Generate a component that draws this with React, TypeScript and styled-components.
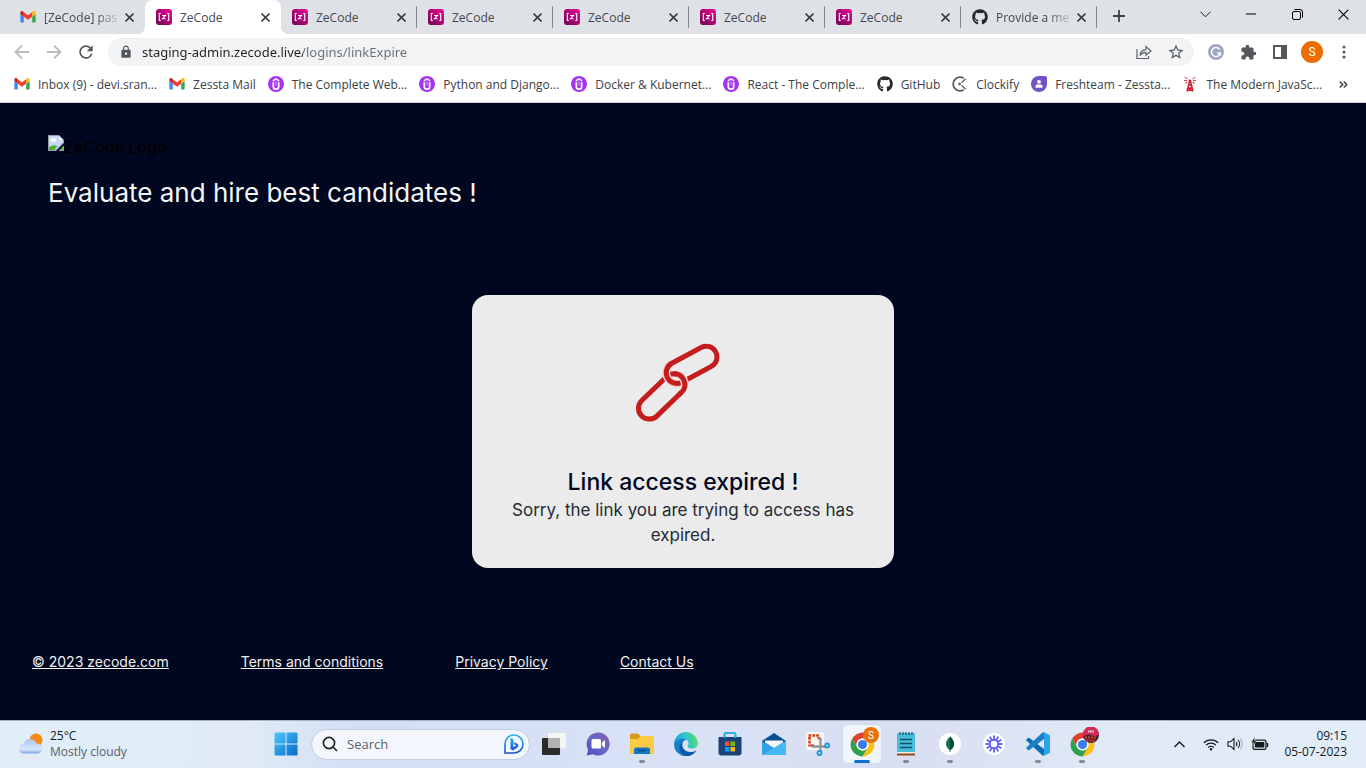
import React from 'react';
import styled, { createGlobalStyle, css } from 'styled-components';
import { FaGithub } from 'react-icons/fa';
import { MdExtension, MdLock, MdRefresh, MdStarBorder } from 'react-icons/md';

const UI = `"Open Sans", "Noto Sans", sans-serif`;
const BRAND = `Inter, "Liberation Sans", sans-serif`;
const NAVY = '#00071f';

const GlobalStyle = createGlobalStyle`
  * { box-sizing: border-box; }
  body { margin: 0; background: ${NAVY}; }
  button { border: 0; padding: 0; background: none; color: inherit; font: inherit; }
  svg { display: block; flex: none; }
`;

const Screen = styled.div`
  display: flex;
  flex-direction: column;
  min-height: 100vh;
  font-family: ${UI};
  font-size: 12px;
`;

/* ---------- browser chrome ---------- */

const TabStrip = styled.div`
  display: flex;
  height: 34px;
  padding-left: 9px;
  background: #dee1e6;
`;

const TabItem = styled.div<{ $active?: boolean; $divider?: boolean }>`
  position: relative;
  display: flex;
  align-items: center;
  flex: 0 1 136px;
  min-width: 0;
  padding: 0 9px 0 11px;
  color: #45494d;
  border-right: 1px solid transparent;
  ${p => p.$divider && css`
    border-image: linear-gradient(transparent 7px, #85898e 7px, #85898e 27px, transparent 27px) 1;
  `}
  ${p => p.$active && css`
    background: #fff;
    border-radius: 8px 8px 0 0;
    &::before, &::after {
      content: '';
      position: absolute;
      bottom: 0;
      width: 8px;
      height: 8px;
    }
    &::before { left: -8px; background: radial-gradient(circle at 0 0, transparent 8px, #fff 8px); }
    &::after { right: -9px; background: radial-gradient(circle at 100% 0, transparent 8px, #fff 8px); }
  `}
`;

const TabButton = styled.button`
  display: flex;
  align-items: center;
  gap: 8px;
  flex: 1;
  min-width: 0;
  height: 100%;
`;

const TabTitle = styled.span<{ $fade?: boolean }>`
  flex: 1;
  text-align: left;
  white-space: nowrap;
  ${p => p.$fade && css`mask-image: linear-gradient(90deg, #000 65%, transparent);`}
`;

const IconButton = styled.button<{ $w?: number; $h?: number }>`
  display: flex;
  align-items: center;
  justify-content: center;
  flex: none;
  width: ${p => p.$w ?? 32}px;
  height: ${p => p.$h ?? 32}px;
  color: #54585d;
`;

const NewTab = styled(IconButton)`margin-left: 8px;`;

const WindowControls = styled.div`
  display: flex;
  margin-left: auto;
`;

const Toolbar = styled.div`
  display: flex;
  align-items: center;
  height: 36px;
  padding: 0 6px;
  background: #fff;
`;

const Omnibox = styled.div`
  display: flex;
  align-items: center;
  flex: 1;
  height: 28px;
  margin: 0 6px;
  padding: 0 2px 0 11px;
  border-radius: 14px;
  background: #f1f3f4;
  color: #54585d;
`;

const Address = styled.input`
  flex: 1;
  min-width: 0;
  height: 28px;
  margin-left: 9px;
  padding: 0;
  border: 0;
  outline: 0;
  font: 13px "Noto Sans", "Open Sans", sans-serif;
  color: transparent;
  background: linear-gradient(90deg, #202124 161px, #6a6e73 161px);
  background-clip: text;
`;

const Avatar = styled.span`
  display: flex;
  align-items: center;
  justify-content: center;
  width: 22px;
  height: 22px;
  border-radius: 50%;
  background: #ef6c00;
  color: #fff;
  font: 12px Roboto, sans-serif;
`;

const Bookmarks = styled.nav`
  display: flex;
  align-items: center;
  gap: 12px;
  height: 33px;
  padding: 0 14px 4px;
  background: #fff;
  border-bottom: 1px solid #d5d7da;
  overflow: hidden;
`;

const Bookmark = styled.a`
  display: flex;
  align-items: center;
  flex: none;
  gap: 8px;
  color: #3c4043;
  text-decoration: none;
  white-space: nowrap;
`;

const More = styled(IconButton)`margin-left: auto;`;

/* ---------- page ---------- */

const Page = styled.div`
  display: flex;
  flex-direction: column;
  flex: 1;
  background: ${NAVY};
  font-family: ${BRAND};
`;

const Header = styled.header`padding: 32px 48px 0;`;

const MissingLogo = styled.div`
  display: flex;
  height: 24px;
  color: #000;
  font-size: 16px;
  line-height: 24px;
`;

const Tagline = styled.h1`
  margin: 16px 0 0;
  color: #f4f5f7;
  font-size: 26px;
  font-weight: 400;
  line-height: 36px;
`;

const Main = styled.main`
  display: flex;
  flex: 1;
  align-items: center;
  justify-content: center;
`;

const Card = styled.section`
  display: flex;
  flex-direction: column;
  align-items: center;
  width: 422px;
  max-width: 100%;
  padding: 47px 32px 20px;
  border-radius: 16px;
  background: #ebebeb;
  text-align: center;
`;

const Illustration = styled.div`padding: 0 10px 44px 0;`;

const CardTitle = styled.h2`
  margin: 0;
  color: ${NAVY};
  font-size: 23px;
  font-weight: 500;
  line-height: 32px;
`;

const CardText = styled.p`
  margin: 0;
  color: #232b35;
  font-size: 17px;
  line-height: 25px;
`;

const Footer = styled.footer`
  display: flex;
  flex-wrap: wrap;
  gap: 12px 72px;
  padding: 0 32px 47px;
`;

const FooterLink = styled.a`
  color: #f0f1f3;
  font-size: 14px;
  line-height: 22px;
`;

/* ---------- taskbar ---------- */

const Taskbar = styled.div`
  display: grid;
  grid-template-columns: 1fr auto 1fr;
  height: 48px;
  box-shadow: inset 0 1px #a9b2c4;
  background: linear-gradient(90deg, #e1edf7 0, #e0ebf6 18%, #d3dff5 26%, #d9e2f5 50%, #d9def2 66%, #e0eaf6 82%, #e2edf8 100%);
  color: #16181c;
`;

const Weather = styled.button`
  display: flex;
  align-items: center;
  justify-self: start;
  gap: 6px;
  padding-left: 18px;
  text-align: left;
  line-height: 16px;
`;

const Condition = styled.span`
  display: block;
  color: #5a6068;
`;

const Apps = styled.div`
  display: flex;
  align-items: center;
  padding-left: 2px;
`;

const AppButton = styled.button<{ $active?: boolean }>`
  position: relative;
  display: flex;
  align-items: center;
  justify-content: center;
  width: 38px;
  height: 38px;
  margin: 0 3px;
  border-radius: 4px;
  ${p => p.$active && css`background: #f0f4fb; box-shadow: 0 0 1px #a8b2c4;`}
`;

const Indicator = styled.span<{ $active?: boolean }>`
  position: absolute;
  left: 50%;
  bottom: 0;
  width: ${p => (p.$active ? 16 : 6)}px;
  height: 3px;
  border-radius: 2px;
  transform: translateX(-50%);
  background: ${p => (p.$active ? '#0a73cf' : '#858992')};
`;

const Badge = styled.span<{ $photo?: boolean }>`
  position: absolute;
  top: 2px;
  right: 2px;
  display: flex;
  align-items: center;
  justify-content: center;
  width: 16px;
  height: 16px;
  border-radius: 50%;
  background: ${p => (p.$photo ? 'none' : '#e8710a')};
  color: #fff;
  font: 10px Roboto, sans-serif;
`;

const SearchBox = styled.label`
  display: flex;
  align-items: center;
  width: 219px;
  height: 31px;
  margin: 0 2px 0 3px;
  padding: 0 5px 0 10px;
  border: 1px solid #c3cde0;
  border-radius: 16px;
  background: #f3f6fd;
`;

const SearchInput = styled.input`
  flex: 1;
  min-width: 0;
  margin-left: 9px;
  padding: 0;
  border: 0;
  outline: 0;
  background: none;
  font: 13px ${UI};
  &::placeholder { color: #5b5f66; opacity: 1; }
`;

const Tray = styled.div`
  display: flex;
  align-items: center;
  justify-self: end;
  gap: 8px;
  padding-right: 19px;
`;

const TrayButton = styled(IconButton)`
  margin-right: 4px;
  color: #16181c;
`;

const Clock = styled.time`
  margin-left: 7px;
  text-align: right;
  line-height: 16px;
`;

/* ---------- icons ---------- */

const Gmail = () => (
  <svg width="16" height="16" viewBox="50 31 92 90">
    <path fill="#4285f4" d="M58 108h14V74L52 59v43c0 3.320 2.690 6 6 6" />
    <path fill="#34a853" d="M120 108h14c3.320 0 6-2.690 6-6V59l-20 15" />
    <path fill="#fbbc04" d="M120 48v26l20-15v-8c0-7.420-8.470-11.650-14.400-7.200" />
    <path fill="#ea4335" d="M72 74V48l24 18 24-18v26L96 92" />
    <path fill="#c5221f" d="M52 51v8l20 15V48l-5.600-4.200c-5.940-4.450-14.400-.220-14.400 7.200" />
  </svg>
);

const ZeCode = () => (
  <svg width="16" height="16" viewBox="0 0 16 16">
    <defs>
      <linearGradient id="zc" x1="1" y1="0" x2="0" y2="1">
        <stop offset="0" stopColor="#f0089a" />
        <stop offset="1" stopColor="#6d0250" />
      </linearGradient>
    </defs>
    <rect width="16" height="16" rx="3" fill="url(#zc)" />
    <path d="M4.800 4.500H3.300v7h1.500M11.200 4.500h1.500v7h-1.500M6.300 6.500h3.200L6.400 9.700h3.300" fill="none" stroke="#fff" strokeWidth="1.100" />
  </svg>
);

const Udemy = () => (
  <svg width="16" height="16" viewBox="0 0 16 16">
    <circle cx="8" cy="8" r="8" fill="#a435f0" />
    <path d="M4.800 4.800 8 2.900l3.200 1.900" fill="none" stroke="#fff" strokeWidth="1.400" />
    <path d="M5.300 6.300v4.200a2.700 2.700 0 0 0 5.400 0V6.300" fill="none" stroke="#fff" strokeWidth="1.700" />
    <path d="M8 5v4.500" stroke="#fff" strokeWidth=".9" opacity=".6" />
  </svg>
);

const Github = () => <FaGithub size={16} color="#24292f" />;

const Clockify = () => (
  <svg width="16" height="16" viewBox="0 0 16 16" fill="none" stroke="#5f6368">
    <path d="M11.600 2.200A6.800 6.800 0 1 0 11.600 13.800" strokeWidth="2" />
    <path d="m9.600 6.700 4-4M9.600 9.300l4 4" strokeWidth="1.400" />
    <circle cx="7.600" cy="8" r="1.400" fill="#5f6368" stroke="none" />
  </svg>
);

const Freshteam = () => (
  <svg width="16" height="16" viewBox="0 0 16 16">
    <path d="M8 0h6a2 2 0 0 1 2 2v6a8 8 0 1 1-8-8Z" fill="#7352c7" />
    <circle cx="8" cy="5.800" r="1.900" fill="#fff" />
    <path d="M4.500 11.800V10a1.600 1.600 0 0 1 1.600-1.600h3.800A1.600 1.600 0 0 1 11.500 10v1.800Z" fill="#fff" />
  </svg>
);

const Tower = () => (
  <svg width="16" height="16" viewBox="0 0 16 16" fill="none" stroke="#d0202e">
    <path d="M7.500 5.500 5 15.500M8.500 5.500 11 15.500M6.500 9h3M5.800 12h4.400M6 14.500l4-2.500M10 14.500 6 12" strokeWidth="1.500" />
    <circle cx="8" cy="5" r="1.400" fill="#d0202e" stroke="none" />
    <path d="m5.500 3-3-2M5 4.700 2 4.500M5.600 6.200 3.200 7.300M10.500 3l3-2M11 4.700l3-.2M10.400 6.200l2.400 1.100" strokeWidth=".9" />
  </svg>
);

const Cross = ({ size = 9, width = 1.6, color = '#3c4043' }) => (
  <svg width={size} height={size} viewBox="0 0 9 9" stroke={color} strokeWidth={width}>
    <path d="m.5.5 8 8M8.500.5l-8 8" />
  </svg>
);

const Arrow = ({ flip = false }) => (
  <svg width="16" height="16" viewBox="0 0 16 16" fill="none" stroke="#babcbe" strokeWidth="1.800">
    <path d={flip ? 'M1 8h13M8 1.500 14.500 8 8 14.500' : 'M15 8H2M8 1.500 1.500 8 8 14.500'} />
  </svg>
);

const Share = () => (
  <svg width="16" height="16" viewBox="0 0 16 16" fill="none" stroke="#5f6368" strokeWidth="1.200">
    <path d="M1 5v9.500h11.500V12M3.800 11.500c.6-4 3-5.800 6.200-5.900V2.500L15 7l-5 4.200V8.400c-2.700 0-4.600.8-6.200 3.100Z" />
  </svg>
);

const Grammarly = () => (
  <svg width="16" height="16" viewBox="0 0 16 16">
    <circle cx="8" cy="8" r="8" fill="#a1a8c6" />
    <path d="M11.500 5.200A4.500 4.500 0 1 0 12.400 9H9.200m3.200 0v2.600" fill="none" stroke="#fff" strokeWidth="1.500" />
  </svg>
);

const SidePanel = () => (
  <svg width="14" height="14" viewBox="0 0 14 14">
    <path d="M0 0h14v14H0zM2 2v10h6V2z" fill="#54585d" fillRule="evenodd" />
  </svg>
);

const Dots = () => (
  <svg width="4" height="14" viewBox="0 0 4 14" fill="#54585d">
    <circle cx="2" cy="2" r="1.500" /><circle cx="2" cy="7" r="1.500" /><circle cx="2" cy="12" r="1.500" />
  </svg>
);

const BrokenImage = () => (
  <svg width="16" height="16" viewBox="0 0 16 16">
    <path d="M0 0h11l5 5v3L8 16H0Z" fill="#9a9fa5" />
    <path d="M1 1h10v4h4v2.500L7.500 15H1Z" fill="#c5d8f7" />
    <path d="M2.500 5.500a1.500 1.500 0 0 1 2-1.800 1.800 1.800 0 0 1 3.300.6 1.200 1.200 0 0 1 0 2.200h-4a1 1 0 0 1-1.300-1Z" fill="#fff" />
    <path d="M1 15v-2.500c2-2 5.500-3 8-1.200L6.500 15Z" fill="#4fae35" />
    <path d="M11 1v4h4Z" fill="#fff" />
    <path d="M16 10.500V16h-5.500Z" fill="#9a9fa5" /><path d="M15 12v3h-3Z" fill="#4fae35" />
  </svg>
);

const ChainLink = () => (
  <svg width="84" height="80" viewBox="0 0 84 80" fill="none" role="img" aria-label="Broken link">
    <g stroke="#c51c1c" strokeWidth="5">
      <path d="M20.800 74.100A10.800 10.800 0 0 1 5.800 58.500L30.500 34.700A10.800 10.800 0 0 1 45.500 50.300Z" />
    </g>
    <path d="M45.600 40.500A10.800 10.800 0 0 1 35.400 21.500" stroke="#f3d3d3" strokeWidth="8" />
    <path d="M45.600 40.500A10.800 10.800 0 0 1 35.400 21.500L65.600 5.200A10.800 10.800 0 0 1 75.800 24.200Z" stroke="#c51c1c" strokeWidth="5" />
    <path d="M41 32.100A10.800 10.800 0 0 1 45.500 50.300" stroke="#f0e0e0" strokeWidth="8" />
    <path d="M38 31.700A10.800 10.800 0 0 1 45.500 50.300L43 52.700" stroke="#c51c1c" strokeWidth="5" />
  </svg>
);

const CloudSun = () => (
  <svg width="26" height="24" viewBox="0 0 26 24">
    <defs>
      <linearGradient id="cloud" x1="0" y1="0" x2="0" y2="1">
        <stop offset="0" stopColor="#a9c4f3" /><stop offset=".7" stopColor="#dbe7fb" /><stop offset="1" stopColor="#7fa5e8" />
      </linearGradient>
    </defs>
    <circle cx="18" cy="8" r="6.500" fill="#f58a12" />
    <path d="M6 21.500a5 5 0 0 1-.5-10 7 7 0 0 1 13 0 5 5 0 0 1 1.500 10Z" fill="url(#cloud)" />
  </svg>
);

const Start = () => (
  <svg width="24" height="24" viewBox="0 0 24 24">
    <defs>
      <linearGradient id="win" x1="0" y1="0" x2="1" y2="1">
        <stop offset="0" stopColor="#4cc9fb" /><stop offset="1" stopColor="#0669c8" />
      </linearGradient>
    </defs>
    <path d="M1.500.5h10v11h-11v-10a1 1 0 0 1 1-1Zm11 0h10a1 1 0 0 1 1 1v10h-11Zm-12 12h11v11h-10a1 1 0 0 1-1-1Zm12 0h11v10a1 1 0 0 1-1 1h-10Z" fill="url(#win)" />
  </svg>
);

const Magnifier = () => (
  <svg width="16" height="16" viewBox="0 0 16 16" fill="none" stroke="#222" strokeWidth="1.700">
    <circle cx="7" cy="7" r="5.600" /><path d="m11 11 4 4" />
  </svg>
);

const Bing = () => (
  <svg width="20" height="20" viewBox="0 0 20 20">
    <defs>
      <linearGradient id="bing" x1="0" y1="0" x2="0" y2="1">
        <stop offset="0" stopColor="#22b3f2" /><stop offset="1" stopColor="#1b52c4" />
      </linearGradient>
    </defs>
    <path d="M1 19V10a9 9 0 1 1 9 9Z" fill="#f3f8ff" stroke="url(#bing)" strokeWidth="1.600" />
    <path d="m6.500 4 2.800 1v8l2.700-1.500-1.500-.8-1.200-2.700 5 2v3l-5.500 3.500-2.300-1.500Z" fill="url(#bing)" />
  </svg>
);

const TaskView = () => (
  <svg width="24" height="24" viewBox="0 0 24 24">
    <rect x="0" y="6" width="18" height="17" rx="1" fill="#2b2b2b" />
    <rect x="6" y="1" width="18" height="15" rx="1" fill="#f6f6f6" />
    <path d="M6 6h12v10H6Z" fill="#b2b2b2" />
  </svg>
);

const Chat = () => (
  <svg width="24" height="24" viewBox="0 0 24 24">
    <defs>
      <linearGradient id="chat" x1="1" y1="0" x2="0" y2="1">
        <stop offset="0" stopColor="#8b5aa8" /><stop offset=".5" stopColor="#6668cc" /><stop offset="1" stopColor="#4a4fb8" />
      </linearGradient>
    </defs>
    <path d="M12 .5a11.500 11.500 0 1 1-5 21.800L.8 23.500l1.300-5.800A11.500 11.500 0 0 1 12 .5Z" fill="url(#chat)" />
    <rect x="5.500" y="7" width="9.500" height="9.500" rx="1.500" fill="#fff" /><path d="m16 10.500 3-2.500v8l-3-2.500Z" fill="#fff" />
  </svg>
);

const Folder = () => (
  <svg width="24" height="24" viewBox="0 0 24 24">
    <path d="M0 3a1.500 1.500 0 0 1 1.500-1.500H8L10.500 4v4H0Z" fill="#d99a1c" />
    <path d="M0 7h8l2.500-3H22.500A1.500 1.500 0 0 1 24 5.500V21a1 1 0 0 1-1 1H1a1 1 0 0 1-1-1Z" fill="#fccb45" />
    <path d="M4 22v-4.500A2 2 0 0 1 6 15.500h12a2 2 0 0 1 2 2V22Z" fill="#1277c4" /><path d="M8 18.500h8" stroke="#084a80" strokeWidth="1.500" />
  </svg>
);

const Edge = () => (
  <svg width="24" height="24" viewBox="0 0 24 24">
    <defs>
      <linearGradient id="edge" x1="0" y1=".5" x2="1" y2=".3">
        <stop offset="0" stopColor="#1c9fe0" /><stop offset=".5" stopColor="#30c4d4" /><stop offset="1" stopColor="#62dc5c" />
      </linearGradient>
    </defs>
    <path d="M12 0a12 12 0 0 1 12 10.500c.2 4-3 6-6 6-2.500 0-4.500-.8-4.500-2 0-.8 1-1.200 1-3C14.500 9 12 6.500 8.500 6.500 4 6.500.5 9.500 0 12 .3 5 5.500 0 12 0Z" fill="url(#edge)" />
    <path d="M0 12c.5-3 4-5.500 8.500-5.500 1.500 0 3 .5 4 1.200C9.500 8 8 11 8 13.500c0 5 4.500 9 11.500 8A12 12 0 0 1 0 12Z" fill="#147ec9" />
    <path d="M8.500 10.500c-1.500 5 2.500 9.500 8 9.500 2.500 0 4.500-.8 6-1.800C20.500 22 16.500 24 13 24c-5-.7-8-5-7.500-9 .3-2 1.500-3.700 3-4.500Z" fill="#0c5aa6" />
  </svg>
);

const Store = () => (
  <svg width="24" height="24" viewBox="0 0 24 24">
    <path d="M6.500 6V2.500A1.500 1.500 0 0 1 8 1h8a1.500 1.500 0 0 1 1.500 1.500V6" fill="none" stroke="#26aee8" strokeWidth="2" />
    <path d="M.5 5h23v15.500a3 3 0 0 1-3 3h-17a3 3 0 0 1-3-3Z" fill="#1a4478" />
    <path d="M7 9.500h4.500V14H7Z" fill="#f25022" /><path d="M12.500 9.500H17V14h-4.500Z" fill="#7fba00" />
    <path d="M7 15h4.500v4.500H7Z" fill="#00a4ef" /><path d="M12.500 15H17v4.500h-4.500Z" fill="#ffb900" />
    <path d="M5.500 5h2M16.500 5h2" stroke="#26aee8" strokeWidth="2" />
  </svg>
);

const Mail = () => (
  <svg width="24" height="24" viewBox="0 0 24 24">
    <path d="M0 9 12 1l12 8v4H0Z" fill="#0b4f93" /><path d="M3 8.500h18v2L12 16l-9-5.500Z" fill="#f5f7fa" />
    <path d="M0 9v14h24L12 16Z" fill="#2fa3e6" /><path d="M24 9v14L12 16Z" fill="#52c4f4" />
    <path d="M0 23 24 9v14Z" fill="#45b8f0" />
  </svg>
);

const Snip = () => (
  <svg width="24" height="24" viewBox="0 0 24 24">
    <rect width="18" height="18" rx="2" fill="#f7f4f4" />
    <path d="M2.500 3.500H14M3.500 5v9.500M5 13.500h3M13 5v2.500" fill="none" stroke="#d0431c" strokeWidth="2.600" strokeDasharray="2.800 1" />
    <path d="M14.500 6v13M6 14.500h13" fill="none" stroke="#8d9299" strokeWidth="2.300" />
    <circle cx="13.500" cy="21" r="2" fill="none" stroke="#2096d8" strokeWidth="1.800" />
    <circle cx="21.200" cy="13.500" r="2" fill="none" stroke="#2096d8" strokeWidth="1.800" />
  </svg>
);

const CHROME_ARM = 'M24 13H43.050A22 22 0 0 0 4.950 13L14.470 29.500A11 11 0 0 1 24 13Z';
const Chrome = () => (
  <svg width="25" height="25" viewBox="1 1 46 46">
    <path d={CHROME_ARM} fill="#de4032" />
    <path d={CHROME_ARM} fill="#fbc116" transform="rotate(120 24 24)" />
    <path d={CHROME_ARM} fill="#2aa24c" transform="rotate(240 24 24)" />
    <circle cx="24" cy="24" r="11" fill="#fff" /><circle cx="24" cy="24" r="8.500" fill="#3a7cec" />
  </svg>
);

const Notepad = () => (
  <svg width="20" height="24" viewBox="0 0 20 24">
    <path d="M1 20h18v3.500H1Z" fill="#8f4a1c" /><path d="M1 20h18v1.500H1Z" fill="#f5efe6" />
    <rect x="1" y="1" width="18" height="19" rx="1" fill="#45bcd8" />
    <path d="M4 0v3M7 0v3M10 0v3M13 0v3M16 0v3" stroke="#20576b" strokeWidth="1.200" />
    <path d="M4 7.500h12M4 11.500h12M4 15.500h12" stroke="#145168" strokeWidth="1.500" />
  </svg>
);

const Mongo = () => (
  <svg width="22" height="22" viewBox="0 0 22 22">
    <circle cx="11" cy="11" r="11" fill="#fff" />
    <path d="M11 3.500c3 3 4 5 4 7.500s-1.500 4.500-3.500 6V19h-1v-2C8.500 15.500 7 13.500 7 11s1-4.500 4-7.500Z" fill="#0a7a4f" />
    <path d="M11 3.500c3 3 4 5 4 7.500s-1.500 4.500-3.500 6H11Z" fill="#064a38" />
  </svg>
);

const Loom = () => (
  <svg width="22" height="22" viewBox="0 0 22 22">
    <circle cx="11" cy="11" r="11" fill="#fff" />
    <g stroke="#625df5" strokeWidth="1.900">
      {[0, 30, 60, 90, 120, 150, 180, 210, 240, 270, 300, 330].map(a => (
        <path key={a} d="M11 7V2.500" transform={`rotate(${a} 11 11)`} />
      ))}
      <circle cx="11" cy="11" r="4.200" fill="none" strokeWidth="1.800" />
    </g>
  </svg>
);

const VSCode = () => (
  <svg width="24" height="24" viewBox="0 0 24 24">
    <path d="M.6 8.700a1 1 0 0 1 0-1.500l1.500-1.300a1 1 0 0 1 1.300 0L18 17v6.500h-1.500Z" fill="#0f6db4" />
    <path d="M.6 15.300a1 1 0 0 0 0 1.500l1.500 1.300a1 1 0 0 0 1.300 0L18 7V.5h-1.500Z" fill="#1b80c8" />
    <path d="M16.500.6A1.500 1.500 0 0 1 18 .2l5 2.500a1.500 1.500 0 0 1 1 1.400v15.800a1.500 1.500 0 0 1-1 1.400l-5 2.500a1.500 1.500 0 0 1-1.500-.4L18 22V2Z" fill="#2ba3ea" />
  </svg>
);

const Photo = () => (
  <svg width="16" height="16" viewBox="0 0 16 16">
    <circle cx="8" cy="8" r="8" fill="#4a2329" />
    <path d="M.1 9a8 8 0 1 1 15.800-1L12 9 5 7.500Z" fill="#d62a5e" />
    <path d="M5 4.500h6" stroke="#fbd2dc" strokeWidth="1.800" strokeDasharray="1.300 .5" />
    <path d="M2 10.500h12M3.500 13.500h9" stroke="#d93a34" strokeWidth="2" strokeDasharray="2 1" />
  </svg>
);

const Wifi = () => (
  <svg width="16" height="13" viewBox="0 0 16 13" fill="none" stroke="#16181c" strokeWidth="1.200">
    <path d="M.8 4.800a10.200 10.200 0 0 1 14.400 0M3 7.200a7 7 0 0 1 10 0M5.200 9.500a4 4 0 0 1 5.600 0" />
    <circle cx="8" cy="11.300" r="1.200" fill="#16181c" stroke="none" />
  </svg>
);

const Speaker = () => (
  <svg width="16" height="14" viewBox="0 0 16 14" fill="none" stroke="#16181c" strokeWidth="1.100">
    <path d="M1 4.800h2.500L7 1.500v11L3.500 9.200H1Z" /><path d="M9 5a3 3 0 0 1 0 4M11 3a6 6 0 0 1 0 8" />
    <path d="M13 1.500a8 8 0 0 1 0 11" stroke="#a9b1bb" />
  </svg>
);

const Battery = () => (
  <svg width="18" height="14" viewBox="0 0 18 14">
    <rect x="2" y="3.100" width="13" height="9.300" rx="1.600" fill="none" stroke="#16181c" strokeWidth="1.300" />
    <path d="M3.800 5h9.500v5.600H3.800Z M16 6h1.200v4H16Z" fill="#16181c" />
    <path d="M3.800 0 0 5.500h2.500L1.500 9 6 4H3.500Z" fill="#16181c" stroke="#e1edf7" strokeWidth=".5" />
  </svg>
);

const Chevron = ({ up = false, w = 11 }) => (
  <svg width={w} height="7" viewBox="0 0 11 7" fill="none" stroke="#16181c" strokeWidth={up ? 1.4 : 1}>
    <path d={up ? 'M.5 6 5.500 1l5 5' : 'm.5.8 5 5 5-5'} />
  </svg>
);

/* ---------- data ---------- */

type Icon = () => React.ReactElement;

const tabs: { title: string; icon: Icon; active?: boolean; fade?: boolean; divider?: boolean }[] = [
  { title: '[ZeCode] pas', icon: Gmail, fade: true },
  { title: 'ZeCode', icon: ZeCode, active: true },
  { title: 'ZeCode', icon: ZeCode, divider: true },
  { title: 'ZeCode', icon: ZeCode, divider: true },
  { title: 'ZeCode', icon: ZeCode, divider: true },
  { title: 'ZeCode', icon: ZeCode, divider: true },
  { title: 'ZeCode', icon: ZeCode, divider: true },
  { title: 'Provide a me', icon: Github, fade: true, divider: true },
];

const bookmarks: [string, Icon][] = [
  ['Inbox (9) - devi.sran...', Gmail],
  ['Zessta Mail', Gmail],
  ['The Complete Web...', Udemy],
  ['Python and Django...', Udemy],
  ['Docker & Kubernet...', Udemy],
  ['React - The Comple...', Udemy],
  ['GitHub', Github],
  ['Clockify', Clockify],
  ['Freshteam - Zessta...', Freshteam],
  ['The Modern JavaSc...', Tower],
];

const apps: { name: string; icon: Icon; open?: boolean; active?: boolean; badge?: 'letter' | 'photo' }[] = [
  { name: 'Task view', icon: TaskView },
  { name: 'Chat', icon: Chat },
  { name: 'File Explorer', icon: Folder, open: true },
  { name: 'Edge', icon: Edge },
  { name: 'Store', icon: Store },
  { name: 'Mail', icon: Mail },
  { name: 'Snipping Tool', icon: Snip },
  { name: 'Chrome', icon: Chrome, open: true, active: true, badge: 'letter' },
  { name: 'Notepad', icon: Notepad, open: true },
  { name: 'MongoDB Compass', icon: Mongo, open: true },
  { name: 'Loom', icon: Loom },
  { name: 'Visual Studio Code', icon: VSCode, open: true },
  { name: 'Chrome, second profile', icon: Chrome, open: true, badge: 'photo' },
];

const footerLinks = ['© 2023 zecode.com', 'Terms and conditions', 'Privacy Policy', 'Contact Us'];

export default function App() {
  return (
    <Screen>
      <GlobalStyle />
      <TabStrip>
        {tabs.map(({ title, icon: Glyph, active, fade, divider }, i) => (
          <TabItem key={i} $active={active} $divider={divider}>
            <TabButton><Glyph /><TabTitle $fade={fade}>{title}</TabTitle></TabButton>
            <IconButton $w={12} aria-label="Close tab"><Cross /></IconButton>
          </TabItem>
        ))}
        <NewTab $w={28} aria-label="New tab">
          <svg width="12" height="12" viewBox="0 0 12 12" stroke="#3c4043" strokeWidth="1.800"><path d="M6 0v12M0 6h12" /></svg>
        </NewTab>
        <WindowControls>
          <IconButton $w={46} $h={28} aria-label="Search tabs"><Chevron /></IconButton>
          <IconButton $w={46} $h={28} aria-label="Minimize">
            <svg width="10" height="2" viewBox="0 0 10 2"><path d="M0 1h10" stroke="#000" /></svg>
          </IconButton>
          <IconButton $w={46} $h={28} aria-label="Restore">
            <svg width="11" height="11" viewBox="0 0 11 11" fill="none" stroke="#000">
              <rect x=".5" y="2.500" width="8" height="8" rx="1.500" /><path d="M2.500.5H8A2.500 2.500 0 0 1 10.500 3v5.500" />
            </svg>
          </IconButton>
          <IconButton $w={46} $h={28} aria-label="Close window"><Cross size={11} width={0.9} color="#000" /></IconButton>
        </WindowControls>
      </TabStrip>

      <Toolbar>
        <IconButton aria-label="Back"><Arrow /></IconButton>
        <IconButton aria-label="Forward"><Arrow flip /></IconButton>
        <IconButton aria-label="Reload"><MdRefresh size={20} /></IconButton>
        <Omnibox>
          <MdLock size={14} />
          <Address aria-label="Address" defaultValue="staging-admin.zecode.live/logins/linkExpire" />
          <IconButton aria-label="Share"><Share /></IconButton>
          <IconButton aria-label="Bookmark this tab"><MdStarBorder size={18} /></IconButton>
        </Omnibox>
        <IconButton aria-label="Grammarly"><Grammarly /></IconButton>
        <IconButton aria-label="Extensions"><MdExtension size={17} /></IconButton>
        <IconButton aria-label="Side panel"><SidePanel /></IconButton>
        <IconButton aria-label="Profile"><Avatar>S</Avatar></IconButton>
        <IconButton aria-label="Menu"><Dots /></IconButton>
      </Toolbar>

      <Bookmarks aria-label="Bookmarks">
        {bookmarks.map(([title, Glyph]) => (
          <Bookmark key={title} href="#"><Glyph />{title}</Bookmark>
        ))}
        <More $w={18} aria-label="More bookmarks">
          <svg width="9" height="7" viewBox="0 0 9 7" fill="none" stroke="#3c4043" strokeWidth="1.400"><path d="m.8.5 3 3-3 3M4.800.5l3 3-3 3" /></svg>
        </More>
      </Bookmarks>

      <Page>
        <Header>
          <MissingLogo><BrokenImage />ZeCode Logo</MissingLogo>
          <Tagline>Evaluate and hire best candidates !</Tagline>
        </Header>
        <Main>
          <Card>
            <Illustration><ChainLink /></Illustration>
            <CardTitle>Link access expired !</CardTitle>
            <CardText>Sorry, the link you are trying to access has expired.</CardText>
          </Card>
        </Main>
        <Footer>
          {footerLinks.map(text => <FooterLink key={text} href="#">{text}</FooterLink>)}
        </Footer>
      </Page>

      <Taskbar>
        <Weather>
          <CloudSun />
          <span>25°C<Condition>Mostly cloudy</Condition></span>
        </Weather>
        <Apps>
          <AppButton aria-label="Start"><Start /></AppButton>
          <SearchBox>
            <Magnifier />
            <SearchInput aria-label="Search" placeholder="Search" />
            <Bing />
          </SearchBox>
          {apps.map(({ name, icon: Glyph, open, active, badge }) => (
            <AppButton key={name} aria-label={name} $active={active}>
              <Glyph />
              {badge && <Badge $photo={badge === 'photo'}>{badge === 'photo' ? <Photo /> : 'S'}</Badge>}
              {open && <Indicator $active={active} />}
            </AppButton>
          ))}
        </Apps>
        <Tray>
          <TrayButton $w={24} aria-label="Show hidden icons"><Chevron up /></TrayButton>
          <Wifi />
          <Speaker />
          <Battery />
          <Clock>09:15<br />05-07-2023</Clock>
        </Tray>
      </Taskbar>
    </Screen>
  );
}
